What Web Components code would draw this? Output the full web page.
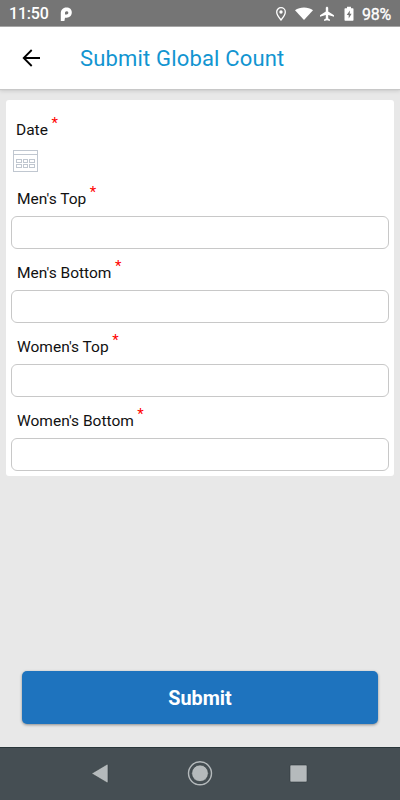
<!DOCTYPE html>
<html lang="en">
<head>
<meta charset="utf-8">
<title>Submit Global Count</title>
<style>
html,body{margin:0;height:100%}
body{font-family:Roboto,"Noto Sans",sans-serif;background:#e8e8e8;overflow:hidden}
</style>
</head>
<body>
<count-app></count-app>
<script>
function define(name, html) {
  const t = document.createElement('template');
  t.innerHTML = html;
  customElements.define(name, class extends HTMLElement {
    constructor() {
      super();
      this.attachShadow({mode: 'open'}).appendChild(t.content.cloneNode(true));
    }
  });
}

define('status-bar', `
<style>
:host{display:flex;align-items:center;height:27px;box-sizing:border-box;padding:1px 9px 0;background:linear-gradient(#757575 26px,#a8a8a8 26px);color:#fff;font-size:16px;line-height:26px}
.time{width:51px;white-space:nowrap;font-weight:500;letter-spacing:-.2px}
svg{display:block;flex:none}
.grow{flex:1}
.pct{width:29px;font-size:16px;padding-top:1px;-webkit-text-stroke:.3px #fff;letter-spacing:-.3px;white-space:nowrap}
</style>
<span class="time">11:50</span>
<svg width="13" height="15" viewBox="0 0 13 15"><path fill="#fff" fill-rule="evenodd" d="M.8 14V6.500C.8 3 3 .6 6.300.6c3.500 0 5.500 2 5.500 4.900 0 3-2.200 5.200-5.200 5.200H5L4.400 14zM5 7.500h1.500C7.700 7.500 8.300 6.800 8.300 5.800S7.600 4.300 6.600 4.300 5 5 5 6z"/></svg>
<span class="grow"></span>
<svg width="12" height="16" viewBox="0 0 12 16"><path fill="none" stroke="#fff" stroke-width="1.300" d="M6 14C3.500 11 1.700 8.400 1.700 6a4.300 4.300 0 0 1 8.600 0c0 2.400-1.800 5-4.300 8z"/><circle cx="6" cy="6" r="1.700" fill="#fff"/></svg>
<svg style="margin-left:8px" width="18" height="16" viewBox="0 0 18 16"><path fill="#fff" d="M0 4.200C5 .6 13 .6 18 4.200L9 14z"/></svg>
<svg style="margin-left:6px" width="16" height="16" viewBox="0 0 16 16"><path fill="#fff" d="M15 10.700V9.200L9.200 5.500V2C9.200 1.300 8.700.7 8 .7S6.800 1.300 6.800 2v3.500L1 9.200v1.500l5.800-1.800v3.500l-1.700 1.200V15L8 14.200l2.900.8v-1.400l-1.700-1.200V8.900z"/></svg>
<svg style="margin:0 8px 0 9px" width="10" height="16" viewBox="0 0 10 16"><path fill="#fff" d="M3 .7h4v1.500h1.800q.7 0 .7.700v11.100q0 .7-.7.700H1.200q-.7 0-.7-.7V2.900q0-.7.700-.7H3z"/><path fill="#757575" d="M5.900 4.500 2.700 9.100h2v3.400l2.900-4.800H5.700z"/></svg>
<span class="pct">98%</span>`);

define('app-header', `
<style>
:host{display:flex;align-items:center;height:62px;box-sizing:border-box;padding:0 22px 0;background:#fff;box-shadow:0 1px 1px #c8c8c8,0 2px 4px #0002;position:relative}
svg{display:block;flex:none}
.t{margin-left:40px;padding-top:1px;font-size:22px;line-height:30px;color:#1295d1;white-space:nowrap;letter-spacing:.17px}
</style>
<svg width="18" height="18" viewBox="0 0 18 18"><path fill="none" stroke="#000" stroke-width="1.800" d="M18 9H2M9.700 1 1.700 9l8 8"/></svg>
<span class="t"><slot></slot></span>`);

define('field-label', `
<style>
:host{display:flex;height:25px;padding-left:6px;font-size:15.500px;line-height:27px;color:#111;white-space:nowrap}
.s{color:#f00;font-size:15px;line-height:13px;margin-left:3.500px}
</style>
<slot></slot><span class="s">*</span>`);

define('text-field', `
<style>
:host{display:block;height:74px}
.b{height:33px;margin-top:5px;box-sizing:border-box;border:1px solid #c8c8c8;border-radius:6px;background:#fff}
</style>
<field-label><slot></slot></field-label><div class="b"></div>`);

define('date-field', `
<style>
:host{display:block;height:69px}
field-label{margin-left:-1px}
svg{display:block;margin:8px 0 0 2px}
</style>
<field-label><slot></slot></field-label>
<svg width="25" height="22" viewBox="0 0 25 22" fill="none" stroke="#c0c7d0" shape-rendering="crispEdges"><path d="M.5.5h24v21H.5zM.5 4.500h24"/><path d="M3.500 9.500h5v3h-5zM10.500 9.500h4v3h-4zM16.500 9.500h5v3h-5zM3.500 14.500h5v3h-5zM10.500 14.500h4v3h-4zM16.500 14.500h5v3h-5z"/></svg>`);

define('form-card', `
<style>
:host{display:block;margin:11px 6px 0;box-sizing:border-box;height:376px;padding:17px 5px 0;background:#fff;border-radius:3px}
</style><slot></slot>`);

define('submit-button', `
<style>
:host{display:block;margin:0 22px 23px}
button{display:block;width:100%;height:53px;border:0;padding:3px 0 0;border-radius:5px;background:#1e73be;color:#fff;font:700 19.800px/30px Roboto,sans-serif;box-shadow:0 1px 3px #0006}
</style><button><slot></slot></button>`);

define('nav-bar', `
<style>
:host{display:flex;height:53px;box-sizing:border-box;background:#454e53;border-top:1px solid #29363a;justify-content:center}
svg{display:block}
</style>
<svg width="400" height="52" viewBox="0 1 400 52"><g fill="#b5babc" stroke="#303a3d" stroke-width=".6"><path d="M91.500 26.500 107 17.300q1-.3 1 .7v17q0 1-1 .7z"/><circle cx="200" cy="26.300" r="8.300"/><rect x="290" y="18" width="17" height="17" rx="1"/></g><circle cx="200" cy="26.300" r="11.500" fill="none" stroke="#b5babc" stroke-width="1.400"/></svg>`);

define('count-app', `
<style>
:host{display:flex;flex-direction:column;height:800px;width:400px;background:#e8e8e8}
.grow{flex:1}
</style>
<status-bar></status-bar>
<app-header>Submit Global Count</app-header>
<form-card>
<date-field>Date</date-field>
<text-field>Men's Top</text-field>
<text-field>Men's Bottom</text-field>
<text-field>Women's Top</text-field>
<text-field>Women's Bottom</text-field>
</form-card>
<div class="grow"></div>
<submit-button>Submit</submit-button>
<nav-bar></nav-bar>`);
</script>
</body>
</html>
